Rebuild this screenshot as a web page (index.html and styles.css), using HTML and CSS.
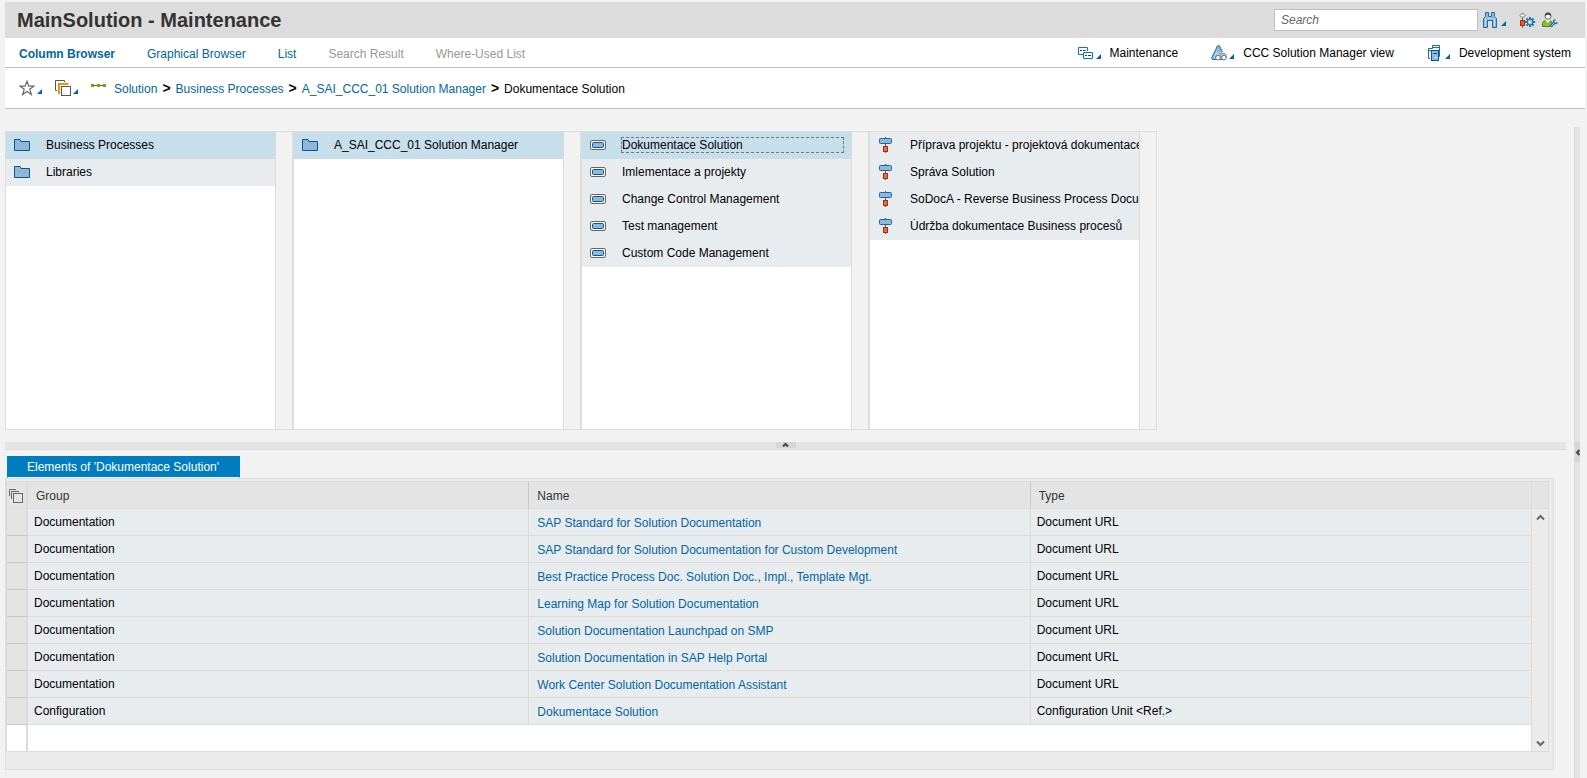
FILE: index.html
```html
<!DOCTYPE html>
<html lang="en">
<head>
<meta charset="utf-8">
<title>MainSolution - Maintenance</title>
<link rel="stylesheet" href="styles.css">
</head>
<body>
<svg class="defs" aria-hidden="true">
  <symbol id="folder" viewBox="0 0 16 14"><path d="M.5 1.500h5.500l1 2h8.500v9H.5z" fill="#93b5d8" stroke="#005b94"/></symbol>
  <symbol id="scenario" viewBox="0 0 16 14"><rect x=".5" y="2.500" width="15" height="9" rx="1.500" fill="#fff" stroke="#666"/><rect x="2.500" y="4.500" width="11" height="5" rx="1" fill="#93b5d8" stroke="#005b94"/></symbol>
  <symbol id="process" viewBox="0 0 16 16"><path d="M7.500 0v16" stroke="#555"/><rect x="1.500" y="1.500" width="12" height="5" rx="1" fill="#93b5d8" stroke="#0a6fa8"/><rect x="5.500" y="9.500" width="4" height="5" fill="#e0703c" stroke="#b02a10"/></symbol>
  <symbol id="caret" viewBox="0 0 5 5"><path d="M5 0v5H0z" fill="#0067a6"/></symbol>
</svg>
<div class="app">
  <header class="title-bar">
    <h1 class="title">MainSolution - Maintenance</h1>
    <form class="search" role="search">
      <input class="search-input" type="text" placeholder="Search" aria-label="Search">
      <button class="icon-button" type="button" aria-label="Start search">
        <svg class="icon" viewBox="0 0 16 16"><path d="M2.500.5h3v4h3v-4h3v4l2 2v9h-4v-7h-5v7h-4v-9l2-2z" fill="#93b5d8" stroke="#1672aa"/><path d="M2.500 6v8M11.500 6v8M5 6.500h4" stroke="#cfe0ef"/></svg>
        <svg class="caret"><use href="#caret"/></svg>
      </button>
    </form>
    <div class="tools">
      <button class="icon-button" type="button" aria-label="Configure">
        <svg class="icon" viewBox="0 0 16 16"><path d="M3.500 5v11" stroke="#666"/><path d="M3.500 1 6 3.500 3.500 6 1 3.500z" fill="#fff" stroke="#666"/><path d="M11 5v10M6 10h10M7.500 6.500l7 7M14.500 6.500l-7 7" stroke="#1672aa" stroke-width="2"/><circle cx="11" cy="10" r="3" fill="#93b5d8" stroke="#1672aa"/><circle cx="11" cy="10" r="1.200" fill="#fff"/><rect x="1.500" y="8.500" width="4" height="5" fill="#e0602c" stroke="#b02a10"/></svg>
      </button>
      <button class="icon-button" type="button" aria-label="User settings">
        <svg class="icon" viewBox="0 0 16 16"><path d="M.5 14.500v-3q0-2.500 3-3h4q2.500.5 2.500 2.500v3.500z" fill="#85c02a" stroke="#4b8a10"/><path d="M3.500 8 5.500 11 8 8z" fill="#fff"/><circle cx="6" cy="4.200" r="3" fill="#fff" stroke="#666"/><path d="M3 4.500Q2.500.5 6 .5t3 4Q8 2.800 6 2.800T3 4.500z" fill="#444"/><path d="M8.500 14.500 12.500 10.500" stroke="#1672aa" stroke-width="2.600"/><path d="M13.500 7.700q-2.500.5-1.500 3 1.500 1.800 3.500-.2" stroke="#1672aa" stroke-width="1.500" fill="none"/><path d="M8.700 14.300 12.300 10.700" stroke="#a8c6e0"/></svg>
      </button>
    </div>
  </header>

  <nav class="nav-bar" aria-label="Views">
    <div class="tabs">
      <button class="nav-tab current" type="button">Column Browser</button>
      <button class="nav-tab" type="button">Graphical Browser</button>
      <button class="nav-tab" type="button">List</button>
      <button class="nav-tab" type="button" disabled>Search Result</button>
      <button class="nav-tab" type="button" disabled>Where-Used List</button>
    </div>
    <div class="selectors">
      <button class="selector" type="button">
        <svg class="icon" viewBox="0 0 16 16"><path d="M5 9.500H.5v-7h9V6M5.500 7.500h9v6h-9z" fill="none" stroke="#007cc0"/><path d="M2 5.500h2m1 0h2.500M7 10.500h2m1 0h3" stroke="#333"/></svg>
        <svg class="caret"><use href="#caret"/></svg>
        <span class="selector-label">Maintenance</span>
      </button>
      <button class="selector" type="button">
        <svg class="icon" viewBox="0 0 16 16"><path d="M6.500.8h2l5.500 12q.3 1.700-1 1.700H1.500q-1-.3-.8-1.700z" fill="#93b5d8" stroke="#1672aa"/><g fill="#fff" stroke="#777"><path d="M4.700 12.500q0-4.500 3-4.500M11 8.500q4.300-1.500 4.300 4" fill="none" stroke="#fff" stroke-width="2.400"/><circle cx="7" cy="12.700" r="2.300"/><circle cx="13" cy="12.700" r="2.300"/><path d="M4.700 12.500q0-4.500 3-4.500M11 8.500q4.300-1.500 4.300 4" fill="none"/></g></svg>
        <svg class="caret"><use href="#caret"/></svg>
        <span class="selector-label">CCC Solution Manager view</span>
      </button>
      <button class="selector" type="button">
        <svg class="icon" viewBox="0 0 16 16"><path d="M3 13.500H1.500v-10h4v-3h7v11H12" fill="#fff" stroke="#1672aa"/><path d="M6 2.500h6.500" stroke="#1672aa"/><path d="M2 5.500h9" stroke="#1672aa"/><rect x="4.500" y="5.500" width="7" height="10" fill="#93b5d8" stroke="#005b94"/><path d="M6 8.500h4" stroke="#005b94"/><path d="M8 12.500h2" stroke="#fff"/></svg>
        <svg class="caret"><use href="#caret"/></svg>
        <span class="selector-label">Development system</span>
      </button>
    </div>
  </nav>

  <nav class="path-bar" aria-label="Path">
    <div class="path-tools">
      <button class="icon-button" type="button" aria-label="Favorites">
        <svg class="icon" viewBox="0 0 16 16"><path d="M8 1.300 9.800 6.200H14.800l-4 3.100L12.300 14.500 8 11.400 3.700 14.500l1.500-5.200-4-3.100h5z" fill="#fff" stroke="#666" stroke-width="1.200"/></svg>
        <svg class="caret"><use href="#caret"/></svg>
      </button>
      <button class="icon-button" type="button" aria-label="Display">
        <svg class="icon" viewBox="0 0 16 16"><path d="M2 10.500H.5V.5h9V2" fill="none" stroke="#555"/><path d="M5 13H4V4h8.500v1" fill="none" stroke="#f39200" stroke-width="2"/><rect x="6.500" y="6.500" width="9" height="9" fill="#fff" stroke="#555"/></svg>
        <svg class="caret"><use href="#caret"/></svg>
      </button>
    </div>
    <svg class="icon" viewBox="0 0 16 16"><path d="M0 5.500h15" stroke="#555"/><path d="M0 4h3v3H0zM6 4h3v3H6zM12 4h3v3h-3z" fill="#6fae00"/></svg>
    <ol class="crumbs">
      <li><a href="#">Solution</a></li>
      <li><a href="#">Business Processes</a></li>
      <li><a href="#">A_SAI_CCC_01 Solution Manager</a></li>
      <li>Dokumentace Solution</li>
    </ol>
  </nav>

  <div class="workspace">
    <main class="main">
      <div class="columns">
        <section class="column"><div class="column-list">
          <button class="entry selected" type="button"><svg class="icon"><use href="#folder"/></svg><span class="entry-text">Business Processes</span></button>
          <button class="entry" type="button"><svg class="icon"><use href="#folder"/></svg><span class="entry-text">Libraries</span></button>
        </div></section>
        <section class="column"><div class="column-list">
          <button class="entry selected" type="button"><svg class="icon"><use href="#folder"/></svg><span class="entry-text">A_SAI_CCC_01 Solution Manager</span></button>
        </div></section>
        <section class="column"><div class="column-list">
          <button class="entry selected focused" type="button"><svg class="icon"><use href="#scenario"/></svg><span class="entry-text">Dokumentace Solution</span></button>
          <button class="entry" type="button"><svg class="icon"><use href="#scenario"/></svg><span class="entry-text">Imlementace a projekty</span></button>
          <button class="entry" type="button"><svg class="icon"><use href="#scenario"/></svg><span class="entry-text">Change Control Management</span></button>
          <button class="entry" type="button"><svg class="icon"><use href="#scenario"/></svg><span class="entry-text">Test management</span></button>
          <button class="entry" type="button"><svg class="icon"><use href="#scenario"/></svg><span class="entry-text">Custom Code Management</span></button>
        </div></section>
        <section class="column"><div class="column-list">
          <button class="entry wide" type="button"><svg class="icon"><use href="#process"/></svg><span class="entry-text">Příprava projektu - projektová dokumentace</span></button>
          <button class="entry wide" type="button"><svg class="icon"><use href="#process"/></svg><span class="entry-text">Správa Solution</span></button>
          <button class="entry wide" type="button"><svg class="icon"><use href="#process"/></svg><span class="entry-text">SoDocA - Reverse Business Process Docu</span></button>
          <button class="entry wide" type="button"><svg class="icon"><use href="#process"/></svg><span class="entry-text">Údržba dokumentace Business procesů</span></button>
        </div></section>
      </div>

      <div class="splitter">
        <button class="splitter-handle" type="button" aria-label="Collapse"><svg class="mini" viewBox="0 0 7 5"><path d="M1 4.500l2.500-2.500L6 4.500" fill="none" stroke="#444" stroke-width="2"/></svg></button>
      </div>

      <section class="elements">
        <button class="elements-tab" type="button">Elements of 'Dokumentace Solution'</button>
        <div class="panel">
          <div class="grid-frame">
            <table class="grid">
              <thead>
                <tr>
                  <th class="mark"><svg class="icon" viewBox="0 0 16 16"><path d="M.5 8V1.500H7M2.500 11V3.500H10" fill="none" stroke="#666"/><rect x="4.500" y="5.500" width="9" height="9" fill="none" stroke="#666"/></svg></th>
                  <th>Group</th><th>Name</th><th>Type</th>
                </tr>
              </thead>
              <tbody>
                <tr><td class="mark"></td><td>Documentation</td><td class="name"><a href="#">SAP Standard for Solution Documentation</a></td><td>Document URL</td></tr>
                <tr><td class="mark"></td><td>Documentation</td><td class="name"><a href="#">SAP Standard for Solution Documentation for Custom Development</a></td><td>Document URL</td></tr>
                <tr><td class="mark"></td><td>Documentation</td><td class="name"><a href="#">Best Practice Process Doc. Solution Doc., Impl., Template Mgt.</a></td><td>Document URL</td></tr>
                <tr><td class="mark"></td><td>Documentation</td><td class="name"><a href="#">Learning Map for Solution Documentation</a></td><td>Document URL</td></tr>
                <tr><td class="mark"></td><td>Documentation</td><td class="name"><a href="#">Solution Documentation Launchpad on SMP</a></td><td>Document URL</td></tr>
                <tr><td class="mark"></td><td>Documentation</td><td class="name"><a href="#">Solution Documentation in SAP Help Portal</a></td><td>Document URL</td></tr>
                <tr><td class="mark"></td><td>Documentation</td><td class="name"><a href="#">Work Center Solution Documentation Assistant</a></td><td>Document URL</td></tr>
                <tr><td class="mark"></td><td>Configuration</td><td class="name"><a href="#">Dokumentace Solution</a></td><td>Configuration Unit &lt;Ref.&gt;</td></tr>
                <tr class="blank"><td class="mark"></td><td colspan="3"></td></tr>
              </tbody>
            </table>
            <div class="scroller">
              <div class="scroller-head"></div>
              <div class="scroller-track">
                <button class="scroll-button" type="button" aria-label="Scroll up"><svg class="arrow" viewBox="0 0 9 7"><path d="M1 5.500 4.500 2 8 5.500" fill="none" stroke="#666" stroke-width="2"/></svg></button>
                <button class="scroll-button" type="button" aria-label="Scroll down"><svg class="arrow" viewBox="0 0 9 7"><path d="M1 1.500 4.500 5 8 1.500" fill="none" stroke="#666" stroke-width="2"/></svg></button>
              </div>
            </div>
          </div>
        </div>
      </section>
    </main>
    <aside class="side-splitter">
      <button class="side-handle" type="button" aria-label="Expand"><svg class="side-arrow" viewBox="0 0 5 7"><path d="M4.500 1 2 3.500 4.500 6" fill="none" stroke="#444" stroke-width="2"/></svg></button>
    </aside>
  </div>
</div>
</body>
</html>
```
FILE: styles.css
```css
* { box-sizing: border-box; }

body {
  margin: 0;
  background: #f2f2f2;
  color: #000;
  font-family: "Liberation Sans", Arial, sans-serif;
  font-size: 12px;
  line-height: 14px;
}

button {
  margin: 0;
  padding: 0;
  border: 0;
  background: none;
  color: inherit;
  font: inherit;
  text-align: left;
}

a { color: #0067a0; text-decoration: none; }

.defs { position: absolute; width: 0; height: 0; }
.icon { display: block; flex: none; width: 16px; height: 16px; }
.caret { display: block; flex: none; width: 5px; height: 5px; margin-bottom: 2px; }

.app {
  display: flex;
  flex-direction: column;
  min-height: 100vh;
  padding: 2px 2px 0 5px;
}

/* Title bar */
.title-bar {
  display: flex;
  align-items: center;
  height: 36px;
  padding: 0 27px 0 12px;
  background: #dcdcdc;
}
.title { flex: 1; margin: 0; color: #333; font-size: 20px; line-height: 24px; }
.search { display: flex; align-items: center; gap: 5px; }
.search-input {
  width: 204px;
  height: 22px;
  padding: 0 6px;
  border: 1px solid #bfbfbf;
  border-radius: 0;
  background: #fff;
  font: italic 12px "Liberation Sans", Arial, sans-serif;
}
.search-input::placeholder { color: #666; opacity: 1; }
.icon-button { display: flex; align-items: flex-end; gap: 2px; padding-bottom: 1px; }
.tools { display: flex; gap: 7px; margin-left: 13px; }

/* View navigation */
.nav-bar {
  display: flex;
  justify-content: space-between;
  align-items: center;
  height: 30px;
  padding: 0 14px;
  border-bottom: 1px solid #bfbfbf;
  background: #fff;
}
.tabs { display: flex; gap: 32px; padding-top: 2px; }
.nav-tab { color: #0067a0; white-space: nowrap; }
.nav-tab.current { font-weight: bold; }
.nav-tab:disabled { color: #999; }
.selectors { display: flex; gap: 33px; }
.selector { display: flex; align-items: flex-end; gap: 2px; }
.selector-label { padding: 0 0 1px 7px; white-space: nowrap; }

/* Path */
.path-bar {
  display: flex;
  align-items: center;
  height: 41px;
  padding: 0 14px;
  border-bottom: 1px solid #bfbfbf;
  background: #fff;
}
.path-tools { display: flex; gap: 13px; margin-right: 13px; }
.crumbs { display: flex; align-items: baseline; margin: 0 0 0 7px; padding: 0; list-style: none; }
.crumbs li + li::before { content: ">"; padding: 0 5px; font-size: 14px; font-weight: bold; }

/* Workspace */
.workspace { display: flex; flex: 1; justify-content: space-between; padding-right: 5px; }
.main { display: flex; flex: 1; flex-direction: column; padding-top: 22px; }

.columns {
  display: flex;
  align-self: flex-start;
  height: 299px;
  border: 1px solid #dcdcdc;
}
.column { width: 288px; padding-right: 16px; border-right: 2px solid #dcdcdc; }
.column:last-child { width: 286px; border-right: 0; }
.column-list {
  height: 100%;
  overflow: hidden;
  border-right: 1px solid #dcdcdc;
  background: #fff;
}
.entry {
  display: flex;
  align-items: center;
  gap: 16px;
  width: 100%;
  height: 27px;
  padding: 0 8px 2px;
  background: #e8ecef;
}
.entry.wide { padding-right: 0; }
.entry.selected { background: #c7deeb; }
.entry-text { flex: 1; overflow: hidden; white-space: nowrap; }
.focused .entry-text { outline: 1px dashed #777; }

.splitter {
  display: flex;
  justify-content: center;
  height: 8px;
  margin: 12px 8px 6px 0;
  border-bottom: 1px solid #dcdcdc;
  background: #e4e4e4;
}
.splitter-handle { display: flex; justify-content: center; width: 20px; height: 6px; background: #d6d6d6; }
.mini { display: block; width: 7px; height: 5px; }

.elements { display: flex; flex-direction: column; margin-right: 20px; }
.elements-tab {
  align-self: flex-start;
  height: 22px;
  margin-left: 2px;
  padding: 0 20px 0 19px;
  border: 1px solid #007cc0;
  border-width: 0 1px;
  border-bottom: 1px solid #fff;
  background: #007cc0;
  color: #fff;
}
.panel { padding: 2px 4px 17px 0; border: 1px solid #dcdcdc; background: #ebebeb; }
.grid-frame { display: flex; border: 1px solid #dcdcdc; }
.grid { flex: 1; border-spacing: 0; table-layout: fixed; width: 100%; }
.grid th, .grid td {
  height: 27px;
  padding: 0 6px;
  border-right: 1px solid #dcdcdc;
  border-bottom: 1px solid #dcdcdc;
  background: #e8ecef;
  text-align: left;
  white-space: nowrap;
}
.grid th {
  padding: 2px 8px 0;
  border-right-color: #c8c8c8;
  background: #e4e4e4;
  color: #333;
  font-weight: normal;
}
.grid td.name { padding: 2px 8px 0; }
.grid .mark {
  width: 21px;
  padding: 0 0 0 2px;
  border-right: 2px solid #dcdcdc;
  border-bottom-color: #c8c8c8;
  background: #e4e4e4;
}
.grid th.mark { padding-top: 2px; border-bottom-color: #dcdcdc; }
.grid th:last-child { border-right-color: #dcdcdc; }
.grid .blank td { height: 26px; border-bottom: 0; background: #fff; }

.scroller { display: flex; flex-direction: column; flex: none; width: 16px; }
.scroller-head { height: 27px; border-bottom: 1px solid #dcdcdc; background: #e4e4e4; }
.scroller-track { display: flex; flex: 1; flex-direction: column; justify-content: space-between; }
.scroll-button { display: flex; align-items: center; justify-content: center; height: 16px; }
.arrow { display: block; width: 9px; height: 7px; }

.side-splitter {
  display: flex;
  flex-direction: column;
  align-items: flex-end;
  width: 6px;
  margin-top: 18px;
  padding-top: 315px;
  border-left: 1px solid #dcdcdc;
  background: #e4e4e4;
}
.side-handle { display: flex; align-items: center; width: 5px; height: 20px; background: #d6d6d6; }
.side-arrow { display: block; width: 5px; height: 7px; }
```
